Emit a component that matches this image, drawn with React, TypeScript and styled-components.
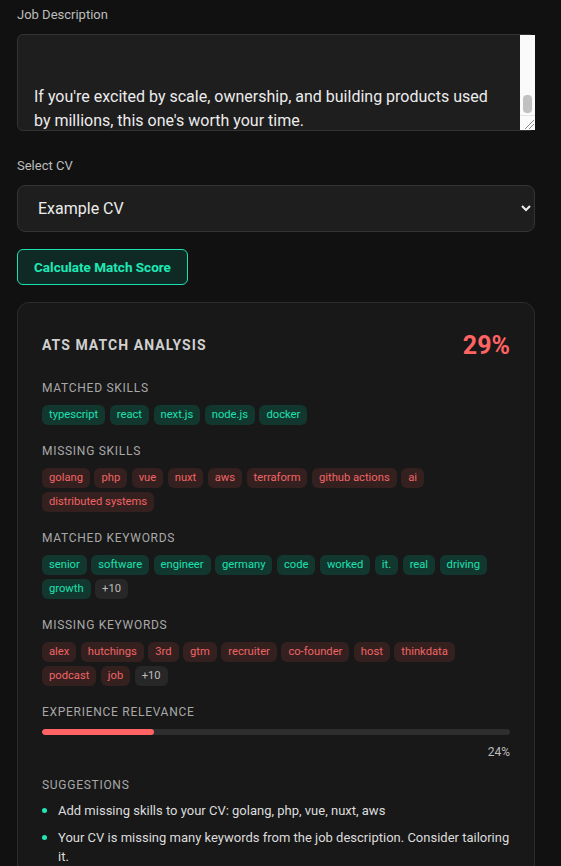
import React, { useEffect, useRef } from "react";
import styled, { createGlobalStyle } from "styled-components";

const Global = createGlobalStyle`
  html, body { margin: 0; padding: 0; background: #111111; }
  body { font-family: Roboto, "Liberation Sans", sans-serif; color: #e6e6e6; }
  * { box-sizing: border-box; }
`;

const Page = styled.div`
  padding: 6px 26px 40px 17px;
  display: flex;
  flex-direction: column;
`;

const FieldLabel = styled.label<{ $mt?: number }>`
  display: block;
  font-size: 13px;
  line-height: 18px;
  color: #bdbdbd;
  margin-top: ${(p) => p.$mt ?? 0}px;
  margin-bottom: 10px;
`;

const TextWrap = styled.div`
  position: relative;
`;

const TextArea = styled.textarea`
  width: 100%;
  height: 97px;
  background: #1e1e1e;
  border: 1px solid #333333;
  border-radius: 6px;
  color: #ececec;
  font-family: Roboto, "Liberation Sans", sans-serif;
  font-size: 16px;
  line-height: 24px;
  padding: 12px 31px 12px 16px;
  resize: none;
  outline: none;
  display: block;
  overflow: hidden;
`;

/* drawn scrollbar that sits over the textarea's right edge */
const ScrollBar = styled.div`
  position: absolute;
  top: 1px;
  right: 0;
  bottom: 1px;
  width: 15px;
  background: #fafafa;
  display: flex;
  flex-direction: column;
  align-items: center;
  pointer-events: none;
`;

const ScrollTrack = styled.div`
  flex: 1;
  width: 100%;
  position: relative;
`;

const Thumb = styled.div`
  position: absolute;
  left: 3px;
  right: 3px;
  bottom: 2px;
  height: 18px;
  border-radius: 4px;
  background: #c1c1c1;
`;

const Resizer = styled.div`
  height: 15px;
  width: 100%;
  border-top: 1px solid #e4e4e4;
  display: flex;
  align-items: flex-end;
  justify-content: flex-end;
`;

const Select = styled.select`
  width: 100%;
  height: 47px;
  background: #1e1e1e;
  border: 1px solid #333333;
  border-radius: 8px;
  color: #ececec;
  font-family: Roboto, "Liberation Sans", sans-serif;
  font-size: 16px;
  padding: 0 10px 0 16px;
  color-scheme: dark;
  outline: none;
`;

const Button = styled.button`
  align-self: flex-start;
  margin-top: 17px;
  height: 36px;
  padding: 0 16px;
  background: #0f2a25;
  border: 1px solid #19e0b0;
  border-radius: 6px;
  color: #1de9b6;
  font-family: Roboto, "Liberation Sans", sans-serif;
  font-weight: 700;
  font-size: 13.5px;
`;

const Card = styled.section`
  margin-top: 17px;
  background: #181818;
  border: 1px solid #2c2c2c;
  border-radius: 12px;
  padding: 24px;
  display: flex;
  flex-direction: column;
`;

const CardHeader = styled.div`
  display: flex;
  align-items: center;
  justify-content: space-between;
  height: 36px;
  margin-bottom: 17px;
`;

const CardTitle = styled.h2`
  margin: 0;
  font-size: 14px;
  font-weight: 700;
  letter-spacing: 0.075em;
  color: #d0d0d0;
`;

const Score = styled.div`
  font-size: 25px;
  font-weight: 700;
  color: #ff6363;
`;

const Section = styled.div`
  display: flex;
  flex-direction: column;
  & + & {
    margin-top: 18px;
  }
`;

const SectionLabel = styled.div`
  font-size: 12px;
  line-height: 16px;
  letter-spacing: 0.06em;
  text-transform: uppercase;
  color: #a8a8a8;
  margin-bottom: 9px;
`;

const TagList = styled.div`
  display: flex;
  flex-wrap: wrap;
  gap: 4px 4.5px;
`;

type Tone = "good" | "bad" | "neutral";

const tagColors: Record<Tone, { bg: string; fg: string }> = {
  good: { bg: "#12372f", fg: "#1de0b0" },
  bad: { bg: "#352020", fg: "#f06464" },
  neutral: { bg: "#272727", fg: "#bdbdbd" },
};

const Tag = styled.span<{ $tone: Tone }>`
  height: 20px;
  line-height: 20px;
  padding: 0 7px;
  border-radius: 6px;
  font-size: 11.2px;
  background: ${(p) => tagColors[p.$tone].bg};
  color: ${(p) => tagColors[p.$tone].fg};
`;

const Track = styled.div`
  height: 6px;
  border-radius: 3px;
  background: #2e2e2e;
  overflow: hidden;
`;

const Fill = styled.div`
  height: 100%;
  border-radius: 3px;
  background: #ff6363;
`;

const Percent = styled.div`
  margin-top: 10px;
  text-align: right;
  font-size: 12px;
  line-height: 14px;
  color: #bdbdbd;
`;

const List = styled.ul`
  list-style: none;
  margin: 0;
  padding: 0;
  display: flex;
  flex-direction: column;
  gap: 8px;
  margin-top: -1px;
`;

const Item = styled.li`
  position: relative;
  padding-left: 16px;
  font-size: 13px;
  line-height: 19px;
  color: #dcdcdc;
  &::before {
    content: "";
    position: absolute;
    left: 0;
    top: 7px;
    width: 5px;
    height: 5px;
    border-radius: 50%;
    background: #1de9b6;
  }
`;

const jobText = `About the role
We're looking for a Senior Software Engineer to join our team in Germany. You'll work on code that powers real products, driving growth across the platform.

What you'll do
- Build and ship services in TypeScript, Go and PHP
- Work with React, Next.js, Vue and Nuxt on the frontend
- Own infrastructure on AWS with Terraform and GitHub Actions
- Design distributed systems at scale


If you're excited by scale, ownership, and building products used by millions, this one's worth your time.`;

const sections: { label: string; tone: Tone; tags: string[]; more?: number }[] = [
  { label: "Matched Skills", tone: "good", tags: ["typescript", "react", "next.js", "node.js", "docker"] },
  {
    label: "Missing Skills",
    tone: "bad",
    tags: ["golang", "php", "vue", "nuxt", "aws", "terraform", "github actions", "ai", "distributed systems"],
  },
  {
    label: "Matched Keywords",
    tone: "good",
    tags: ["senior", "software", "engineer", "germany", "code", "worked", "it.", "real", "driving", "growth"],
    more: 10,
  },
  {
    label: "Missing Keywords",
    tone: "bad",
    tags: ["alex", "hutchings", "3rd", "gtm", "recruiter", "co-founder", "host", "thinkdata", "podcast", "job"],
    more: 10,
  },
];

export default function App() {
  const ref = useRef<HTMLTextAreaElement>(null);
  useEffect(() => {
    const el = ref.current;
    if (el) el.scrollTop = el.scrollHeight - el.clientHeight - 15;
  }, []);

  return (
    <>
      <Global />
      <Page>
        <FieldLabel>Job Description</FieldLabel>
        <TextWrap>
          <TextArea ref={ref} defaultValue={jobText} />
          <ScrollBar>
            <ScrollTrack>
              <Thumb />
            </ScrollTrack>
            <Resizer>
              <svg width="14" height="14" viewBox="0 0 14 14">
                <path d="M4 13 L13 4 M8 13 L13 8" stroke="#8a8a8a" strokeWidth="1" fill="none" />
              </svg>
            </Resizer>
          </ScrollBar>
        </TextWrap>
        <FieldLabel $mt={26}>Select CV</FieldLabel>
        <Select defaultValue="example">
          <option value="example">Example CV</option>
        </Select>
        <Button>Calculate Match Score</Button>
        <Card>
          <CardHeader>
            <CardTitle>ATS MATCH ANALYSIS</CardTitle>
            <Score>29%</Score>
          </CardHeader>
          {sections.map((s) => (
            <Section key={s.label}>
              <SectionLabel>{s.label}</SectionLabel>
              <TagList>
                {s.tags.map((t) => (
                  <Tag key={t} $tone={s.tone}>
                    {t}
                  </Tag>
                ))}
                {s.more ? <Tag $tone="neutral">+{s.more}</Tag> : null}
              </TagList>
            </Section>
          ))}
          <Section>
            <SectionLabel>Experience Relevance</SectionLabel>
            <Track>
              <Fill style={{ width: "24%" }} />
            </Track>
            <Percent>24%</Percent>
          </Section>
          <Section>
            <SectionLabel>Suggestions</SectionLabel>
            <List>
              <Item>Add missing skills to your CV: golang, php, vue, nuxt, aws</Item>
              <Item>Your CV is missing many keywords from the job description. Consider tailoring it.</Item>
            </List>
          </Section>
        </Card>
      </Page>
    </>
  );
}
